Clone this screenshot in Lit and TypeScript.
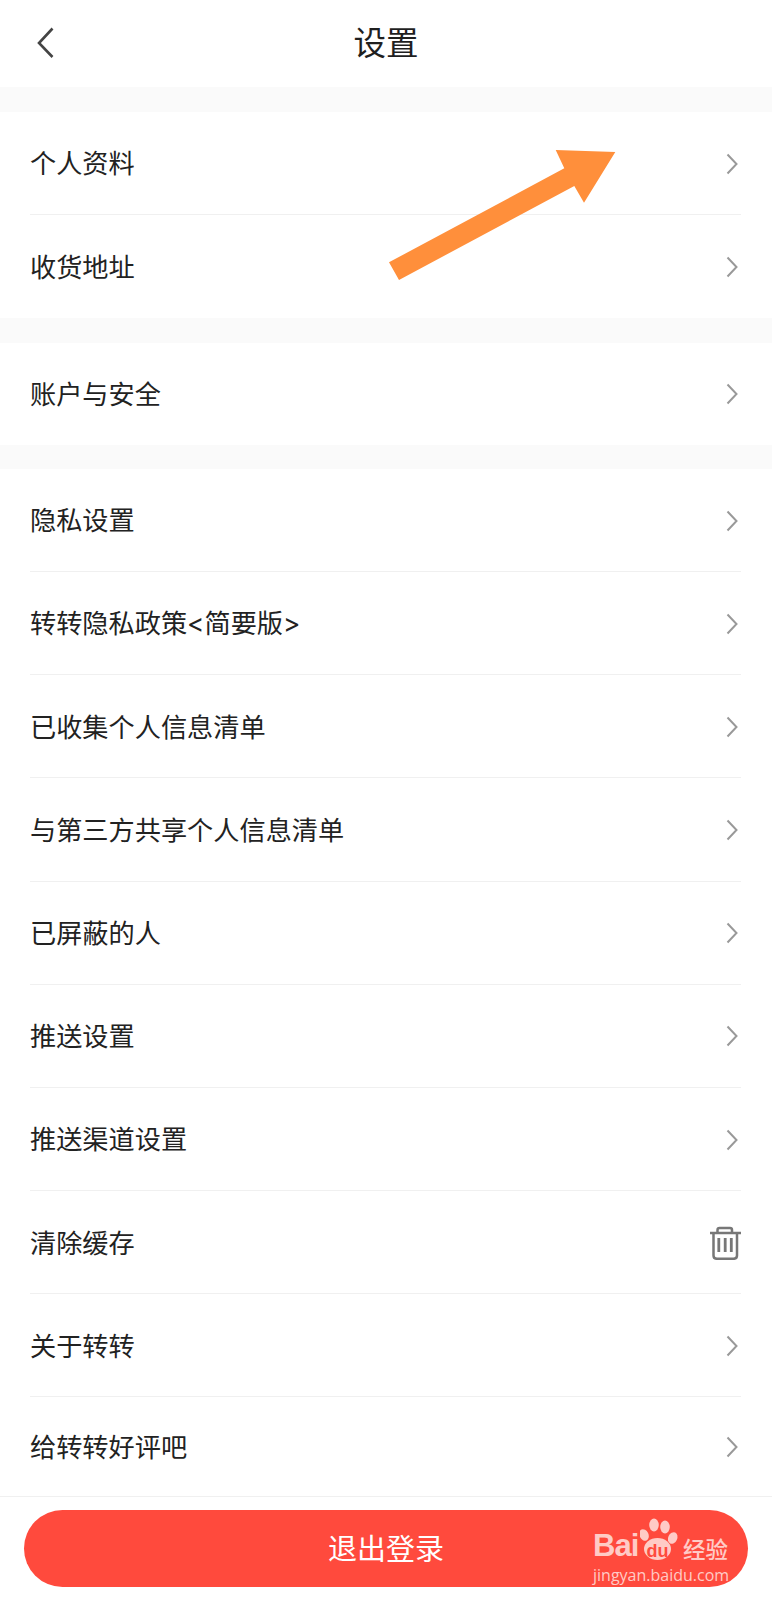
import { LitElement, html, css, svg } from "lit";
import { customElement } from "lit/decorators.js";

const chevron = html`<svg class="chev" width="14" height="24" viewBox="0 0 14 24"><path d="M2.5 2.5 L11.5 12 L2.5 21.5" fill="none" stroke="#999" stroke-width="2"/></svg>`;
const trash = html`<svg class="trash" width="32" height="34" viewBox="0 0 32 34" fill="none" stroke="#777" stroke-width="2.5"><path d="M1 7H32"/><path d="M8.5 7V4C8.5 2.8 9.5 2 10.5 2H21C22 2 23 2.8 23 4V7"/><path d="M4.5 7V29.5C4.5 31.5 6 32.8 8 32.8H24.5C26.5 32.8 28 31.5 28 29.5V7"/><path stroke-width="2.8" d="M9.8 12V26M16.2 12V26M22.3 12V26"/></svg>`;

const groups: string[][] = [
  ["个人资料", "收货地址"],
  ["账户与安全"],
  ["隐私设置", "转转隐私政策<简要版>", "已收集个人信息清单", "与第三方共享个人信息清单", "已屏蔽的人", "推送设置", "推送渠道设置", "清除缓存", "关于转转", "给转转好评吧"],
];

@customElement("app-root")
export class AppRoot extends LitElement {
  static styles = css`
    :host { display: block; width: 772px; height: 1600px; background: #fff; position: relative; overflow: hidden;
      font-family: "Noto Sans CJK SC", "Liberation Sans", sans-serif; color: #222; }
    .header { height: 87px; box-sizing: border-box; padding-bottom: 4px; position: relative; display: flex; align-items: center; justify-content: center; }
    .title { font-size: 32.5px; color: #1f1f1f; line-height: 1; }
    .back { position: absolute; left: 36px; top: 27px; }
    .band { height: 25px; background: #fafafa; }
    .group2 + .band, .group1 + .band { height: 24.5px; }
    .row { height: 103.2px; box-sizing: border-box; margin: 0 31px 0 30px; display: flex; align-items: center; justify-content: space-between;
      border-bottom: 1px solid #f0f0f0; font-size: 26.2px; line-height: 1; font-family: Inter, "Noto Sans CJK SC", sans-serif; }
    .row.last { border-bottom: none; }
    .row span { padding-top: 3px; }
    .chev { margin-right: 2px; margin-top: 1px; }
    .trash { margin-top: 2px; }
    .group1 .row.last { height: 103px; }
    .group2 .row.last { height: 102px; }
    .group3 .row:first-child { height: 102.8px; }
    .group3 .row.last { height: 98.5px; }
    .footer { border-top: 1px solid #f0f0f0; padding: 13px 24px 0; position: relative; }
    .logout { height: 77px; box-sizing: border-box; padding-bottom: 3px; border-radius: 39px; background: #ff4a3d; color: #fff; font-size: 29px; display: flex; align-items: center; justify-content: center; }
    .arrow { position: absolute; left: 380px; top: 140px; }
    .mark { position: absolute; left: 593px; top: 1518px; color: #ffcbc6; }
    .mark .top { display: flex; align-items: flex-end; height: 44px; }
    .bai { font: bold 31px/1 "Liberation Sans", sans-serif; letter-spacing: -1px; width: 47px; margin-bottom: 1px; }
    .paw { flex: none; }
    .jy { font-size: 22.5px; line-height: 1; margin-left: 3px; margin-bottom: 3px; font-weight: 500; white-space: nowrap; }
    .url { font: 16px/1 "Open Sans", "Liberation Sans", sans-serif; margin-top: 5px; white-space: nowrap; }
  `;

  render() {
    return html`
      <div class="header">
        <svg class="back" width="20" height="32" viewBox="0 0 20 32"><path d="M16.5 1.5 L3 16 L16.5 30" fill="none" stroke="#444" stroke-width="2.6"/></svg>
        <div class="title">设置</div>
      </div>
      ${groups.map((g, gi) => html`
        <div class="band"></div>
        <div class="group${gi + 1}">
          ${g.map((t, i) => html`
            <div class="row ${i === g.length - 1 ? "last" : ""}">
              <span>${t}</span>
              ${t === "清除缓存" ? trash : chevron}
            </div>`)}
        </div>`)}
      <div class="footer"><div class="logout">退出登录</div></div>
      <svg class="arrow" width="240" height="150" viewBox="380 140 240 150">
        <polygon fill="#ff8f3b" points="389,262.3 564.3,168.3 555.7,150 615.3,152 584,202.7 574.3,186 399,280"/>
      </svg>
      <div class="mark">
        <div class="top">
          <span class="bai">Bai</span>
          <svg class="paw" width="40" height="44" viewBox="0 0 40 44">
            ${svg`
              <g fill="#ffcbc6">
                <ellipse cx="4" cy="17" rx="4.5" ry="6" transform="rotate(-25 4 17)"/>
                <ellipse cx="14" cy="7" rx="4.8" ry="6.5"/>
                <ellipse cx="25" cy="9" rx="4.8" ry="6.5"/>
                <ellipse cx="32.7" cy="20" rx="4.5" ry="6" transform="rotate(25 32.7 20)"/>
                <ellipse cx="17.5" cy="31" rx="13.5" ry="11"/>
              </g>
              <text x="17.5" y="38.5" text-anchor="middle" font-family="Liberation Sans, sans-serif" font-weight="bold" font-size="18" fill="#ff4a3d">du</text>
            `}
          </svg>
          <span class="jy">经验</span>
        </div>
        <div class="url">jingyan.baidu.com</div>
      </div>
    `;
  }
}
